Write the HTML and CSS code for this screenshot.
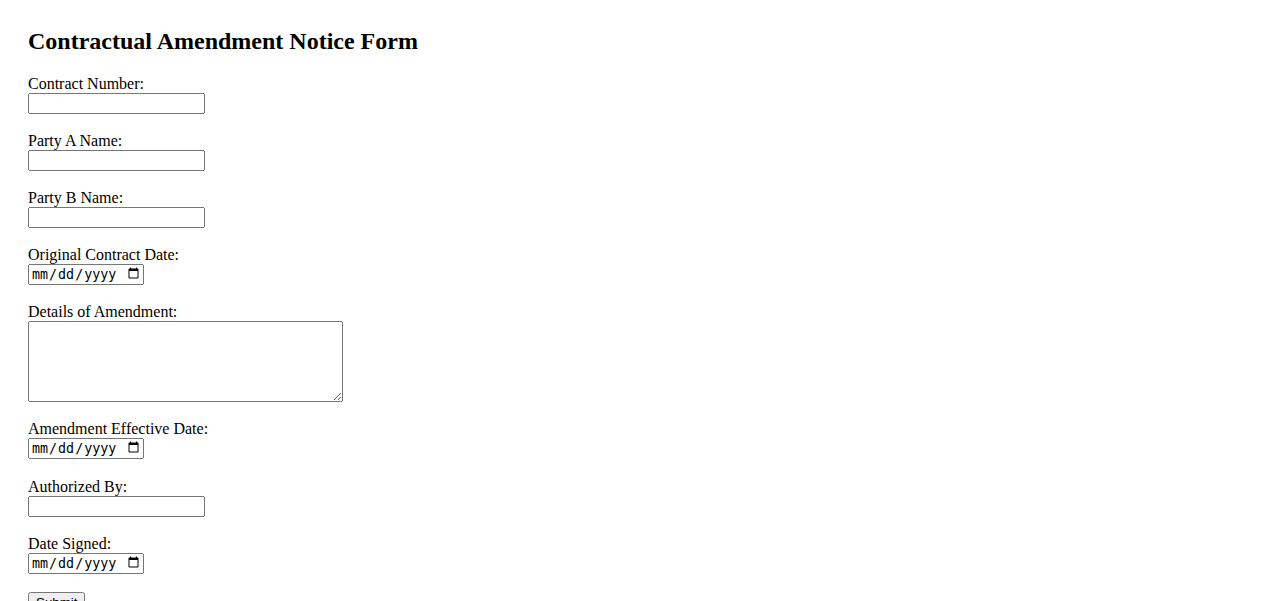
FILE: index.html
```html
<!DOCTYPE html>
<html lang="en">
<head>
<meta charset="utf-8">
<title>Contractual Amendment Notice Form</title>
<link rel="stylesheet" href="styles.css">
</head>
<body>
<main class="page">
  <h2 class="title">Contractual Amendment Notice Form</h2>
  <form class="form">
    <div class="field">
      <label class="label" for="contract-number">Contract Number:</label>
      <input class="text-input" type="text" id="contract-number">
    </div>
    <div class="field">
      <label class="label" for="party-a">Party A Name:</label>
      <input class="text-input" type="text" id="party-a">
    </div>
    <div class="field">
      <label class="label" for="party-b">Party B Name:</label>
      <input class="text-input" type="text" id="party-b">
    </div>
    <div class="field">
      <label class="label" for="original-date">Original Contract Date:</label>
      <input class="date-input" type="date" id="original-date">
    </div>
    <div class="field">
      <label class="label" for="details">Details of Amendment:</label>
      <textarea class="textarea" id="details"></textarea>
    </div>
    <div class="field field-spaced">
      <label class="label" for="effective-date">Amendment Effective Date:</label>
      <input class="date-input" type="date" id="effective-date">
    </div>
    <div class="field">
      <label class="label" for="authorized">Authorized By:</label>
      <input class="text-input" type="text" id="authorized">
    </div>
    <div class="field">
      <label class="label" for="date-signed">Date Signed:</label>
      <input class="date-input" type="date" id="date-signed">
    </div>
    <div class="field">
      <button class="submit" type="submit">Submit</button>
    </div>
  </form>
</main>
</body>
</html>
```

FILE: styles.css
```css
html, body {
  margin: 0;
  padding: 0;
  background: #ffffff;
}

.page {
  padding: 28px 28px 0 28px;
  font-family: "Liberation Serif", "Times New Roman", serif;
  font-size: 16px;
  color: #000000;
}

.title {
  margin: 0 0 19px 0;
  font-size: 24px;
  font-weight: bold;
  line-height: 27.6px;
}

.form {
  display: flex;
  flex-direction: column;
  align-items: flex-start;
  gap: 18px;
}

.field {
  display: flex;
  flex-direction: column;
  align-items: flex-start;
}

.field-spaced {
  margin-bottom: 1px;
}

.label {
  line-height: 18px;
  height: 18px;
}

.text-input {
  box-sizing: border-box;
  width: 177px;
  height: 21px;
  margin: 0;
}

.date-input {
  box-sizing: border-box;
  width: 116px;
  height: 21px;
  margin: 0;
}

.textarea {
  box-sizing: border-box;
  width: 315px;
  height: 81px;
  margin: 0;
}

.submit {
  margin: 0;
  font-size: 13.333px;
}
```
